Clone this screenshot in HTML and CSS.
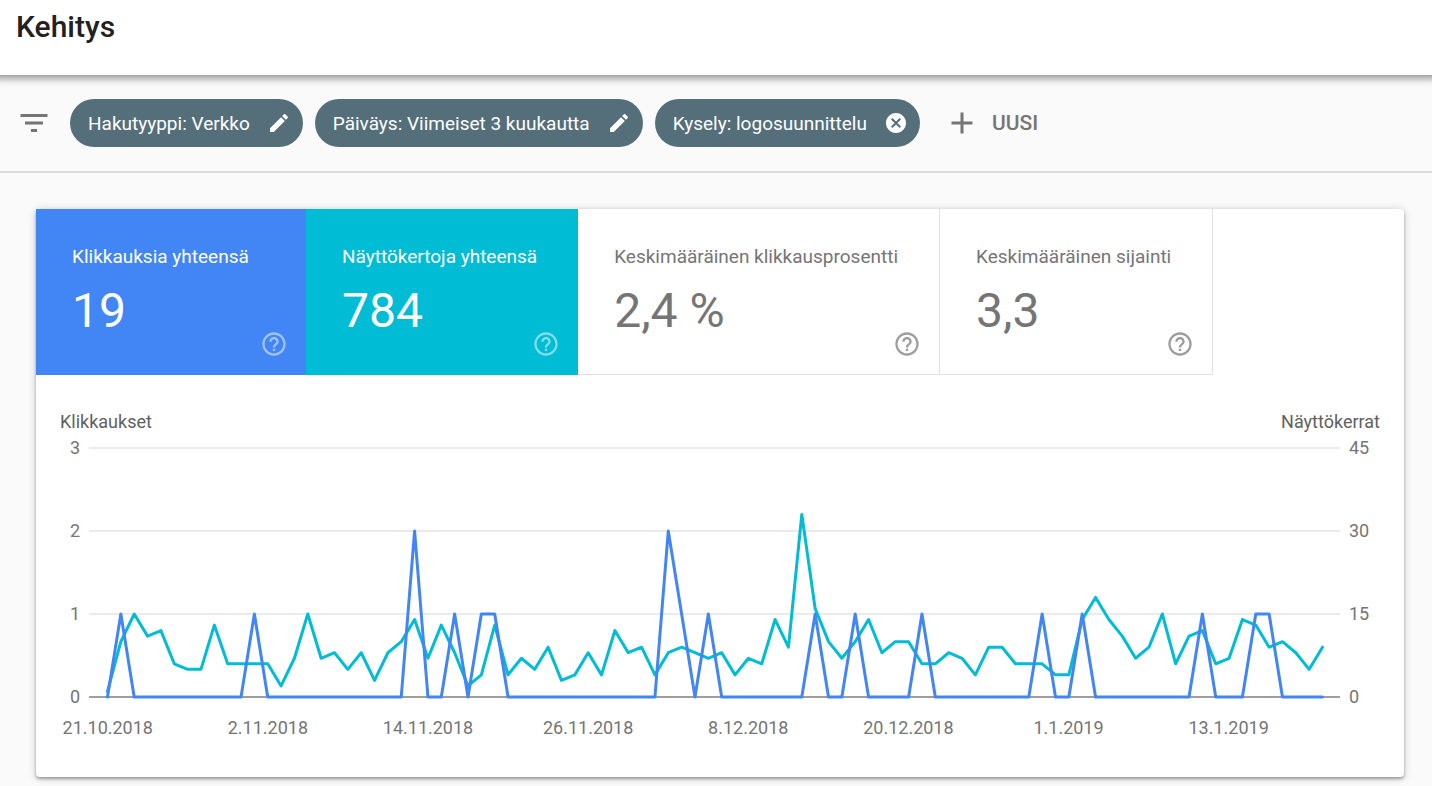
FILE: index.html
```html
<!DOCTYPE html>
<html lang="fi">
<head>
  <meta charset="utf-8">
  <meta name="viewport" content="width=device-width, initial-scale=1">
  <title>Kehitys</title>
  <link rel="stylesheet" href="styles.css">
</head>
<body>
  <svg class="sprite" aria-hidden="true">
    <symbol id="i-edit" viewBox="0 0 24 24"><path d="M3 17.25V21h3.75L17.81 9.94l-3.75-3.75L3 17.25zM20.71 7.04a1 1 0 0 0 0-1.41l-2.34-2.34a1 1 0 0 0-1.41 0l-1.83 1.83 3.75 3.75 1.83-1.83z"/></symbol>
    <symbol id="i-cancel" viewBox="0 0 24 24"><path d="M12 2C6.47 2 2 6.47 2 12s4.47 10 10 10 10-4.47 10-10S17.53 2 12 2zm5 13.59L15.59 17 12 13.41 8.41 17 7 15.59 10.59 12 7 8.41 8.41 7 12 10.59 15.59 7 17 8.41 13.41 12 17 15.59z"/></symbol>
    <symbol id="i-help" viewBox="0 0 24 24"><path d="M11 18h2v-2h-2v2zm1-16C6.48 2 2 6.48 2 12s4.48 10 10 10 10-4.48 10-10S17.52 2 12 2zm0 18c-4.41 0-8-3.59-8-8s3.59-8 8-8 8 3.59 8 8-3.59 8-8 8zm0-14c-2.21 0-4 1.79-4 4h2c0-1.1.9-2 2-2s2 .9 2 2c0 2-3 1.75-3 5h2c0-2.25 3-2.5 3-5 0-2.21-1.79-4-4-4z"/></symbol>
  </svg>

  <header class="header"><h1 class="title">Kehitys</h1></header>

  <div class="filters">
    <svg class="icon-lg" viewBox="0 0 24 24" aria-hidden="true"><path d="M10 18h4v-2h-4v2zM3 6v2h18V6H3zm3 7h12v-2H6v2z"/></svg>
    <div class="chips">
      <button class="chip" type="button">Hakutyyppi: Verkko<svg class="icon" aria-hidden="true"><use href="#i-edit"/></svg></button>
      <button class="chip" type="button">Päiväys: Viimeiset 3 kuukautta<svg class="icon" aria-hidden="true"><use href="#i-edit"/></svg></button>
      <button class="chip" type="button">Kysely: logosuunnittelu<svg class="icon" aria-hidden="true"><use href="#i-cancel"/></svg></button>
    </div>
    <button class="add" type="button"><svg class="icon-lg" viewBox="0 0 24 24" aria-hidden="true"><path d="M19 13h-6v6h-2v-6H5v-2h6V5h2v6h6v2z"/></svg>UUSI</button>
  </div>

  <main class="card">
    <div class="tiles">
      <section class="tile tile-clicks">
        <h2 class="tile-label">Klikkauksia yhteensä</h2>
        <div class="tile-row"><span class="tile-value">19</span><button class="help" type="button" aria-label="Ohje"><svg class="help-icon"><use href="#i-help"/></svg></button></div>
      </section>
      <section class="tile tile-views">
        <h2 class="tile-label">Näyttökertoja yhteensä</h2>
        <div class="tile-row"><span class="tile-value">784</span><button class="help" type="button" aria-label="Ohje"><svg class="help-icon"><use href="#i-help"/></svg></button></div>
      </section>
      <section class="tile">
        <h2 class="tile-label">Keskimääräinen klikkausprosentti</h2>
        <div class="tile-row"><span class="tile-value">2,4 %</span><button class="help" type="button" aria-label="Ohje"><svg class="help-icon"><use href="#i-help"/></svg></button></div>
      </section>
      <section class="tile">
        <h2 class="tile-label">Keskimääräinen sijainti</h2>
        <div class="tile-row"><span class="tile-value">3,3</span><button class="help" type="button" aria-label="Ohje"><svg class="help-icon"><use href="#i-help"/></svg></button></div>
      </section>
    </div>

    <div class="chart">
      <div class="axis-names"><span>Klikkaukset</span><span>Näyttökerrat</span></div>
      <div class="plot-area">
        <div class="axis axis-left"><span>3</span><span>2</span><span>1</span><span>0</span></div>
        <svg class="plot" viewBox="0 0 1251 249" preserveAspectRatio="none" role="img" aria-label="Klikkaukset ja näyttökerrat päivittäin">
          <path class="grid-line" d="M0 0H1251M0 83H1251M0 166H1251"/>
          <path class="base-line" d="M0 249H1251"/>
          <polyline class="line line-views" id="views"/>
          <polyline class="line line-clicks" id="clicks"/>
        </svg>
        <div class="axis axis-right"><span>45</span><span>30</span><span>15</span><span>0</span></div>
        <div class="dates"><span>21.10.2018</span><span>2.11.2018</span><span>14.11.2018</span><span>26.11.2018</span><span>8.12.2018</span><span>20.12.2018</span><span>1.1.2019</span><span>13.1.2019</span></div>
      </div>
    </div>
  </main>
  <script src="chart.js"></script>
</body>
</html>
```
FILE: styles.css
```css
* { box-sizing: border-box; }

body {
  margin: 0;
  background: #fafafa;
  color: #757575;
  font-family: Roboto, sans-serif;
  font-size: 19px;
}

button {
  border: 0;
  padding: 0;
  background: none;
  color: inherit;
  font: inherit;
  cursor: pointer;
}

svg { display: block; flex: none; fill: currentColor; }

.sprite { display: none; }
.icon { width: 24px; height: 24px; }
.icon-lg { width: 36px; height: 36px; }

.header {
  padding: 9px 16px 30px;
  background: #fff;
  box-shadow: 0 -5px 8px 8px rgba(0, 0, 0, 0.45);
}

.title {
  margin: 0;
  color: #212121;
  font-size: 30px;
  font-weight: 500;
  line-height: 36px;
}

.filters {
  display: flex;
  align-items: center;
  padding: 24px 16px;
  border-bottom: 2px solid #dcdcdc;
}

.chips {
  display: flex;
  flex-wrap: wrap;
  gap: 12px;
  margin: 0 24px 0 18px;
}

.chip {
  display: flex;
  align-items: center;
  gap: 17px;
  height: 48px;
  padding: 0 12px 0 18px;
  border-radius: 24px;
  background: #546e7a;
  color: #fff;
  white-space: nowrap;
}

.add {
  display: flex;
  align-items: center;
  gap: 12px;
  font-size: 21px;
  font-weight: 500;
}

.card {
  margin: 36px 28px 9px 36px;
  border-radius: 4px;
  background: #fff;
  box-shadow: 0 2px 3px rgba(0, 0, 0, 0.3), 0 1px 8px rgba(0, 0, 0, 0.2);
}

.tiles { display: flex; flex-wrap: wrap; }

.tile {
  min-width: 270px;
  padding: 36px 18px 16px 36px;
  border: solid #e0e0e0;
  border-width: 0 1px 1px 0;
}

.tile-clicks, .tile-views {
  padding-bottom: 17px;
  border: 0;
  color: #fff;
}

.tile-clicks { background: #4285f4; }
.tile-views { background: #00bcd4; }

.tile-label {
  margin: 0 23px 12px 0;
  font-size: 19px;
  font-weight: 400;
  line-height: 24px;
}

.tile-row {
  display: flex;
  justify-content: space-between;
  height: 77px;
}

.tile-value { font-size: 48px; line-height: 60px; }
.help { align-self: flex-end; opacity: 0.7; }
.tile-clicks .help, .tile-views .help { opacity: 0.5; }
.help-icon { width: 28px; height: 28px; }

.chart {
  padding: 37px 24px 39px;
  font-size: 18px;
  line-height: 20px;
}

.axis-names {
  display: flex;
  justify-content: space-between;
  margin-bottom: 6px;
  color: #616161;
}

.plot-area {
  display: grid;
  grid-template-columns: 20px 1fr 31px;
  column-gap: 9px;
  row-gap: 11px;
}

.axis {
  display: flex;
  flex-direction: column;
  justify-content: space-between;
}

.axis-left { text-align: right; }

.plot {
  width: 100%;
  height: 249px;
  margin: 10px 0;
  overflow: visible;
  fill: none;
}

.plot * { vector-effect: non-scaling-stroke; }
.grid-line { stroke: #ebebeb; stroke-width: 2px; }
.base-line { stroke: #9e9e9e; stroke-width: 2px; }
.line { stroke-width: 3px; stroke-linejoin: round; stroke-linecap: round; }
.line-views { stroke: #00bcd4; }
.line-clicks { stroke: #4285f4; }

.dates {
  grid-column: 2;
  display: flex;
  justify-content: space-between;
  padding: 0 8.9% 0 1.5%;
}

.dates span {
  display: flex;
  justify-content: center;
  width: 0;
}
```
FILE: chart.js
```js
const views = [
  1, 10, 15, 11, 12, 6, 5, 5, 13, 6, 6, 6, 6, 2, 7, 15, 7, 8, 5, 8, 3, 8, 10,
  14, 7, 13, 8, 2, 4, 13, 4, 7, 5, 9, 3, 4, 8, 4, 12, 8, 9, 4, 8, 9, 8, 7,
  8, 4, 7, 6, 14, 9, 33, 16, 10, 7, 10, 14, 8, 10, 10, 6, 6, 8, 7, 4, 9, 9, 6,
  6, 6, 4, 4, 14, 18, 14, 11, 7, 9, 15, 6, 11, 12, 6, 7, 14, 13, 9, 10, 8, 5, 9
];

// Days with at least one click, keyed by day index.
const clickDays = {
  1: 1, 11: 1, 23: 2, 26: 1, 28: 1, 29: 1, 42: 2, 43: 1, 45: 1, 53: 1,
  56: 1, 61: 1, 70: 1, 73: 1, 82: 1, 86: 1, 87: 1
};
const clicks = views.map((_, day) => clickDays[day] || 0);

const HEIGHT = 249;
const START = 18.5;
const STEP = 13.352;

function draw(id, values, max) {
  const points = values.map((v, i) => `${START + i * STEP},${HEIGHT - v / max * HEIGHT}`);
  document.getElementById(id).setAttribute('points', points.join(' '));
}

draw('views', views, 45);
draw('clicks', clicks, 3);
```
